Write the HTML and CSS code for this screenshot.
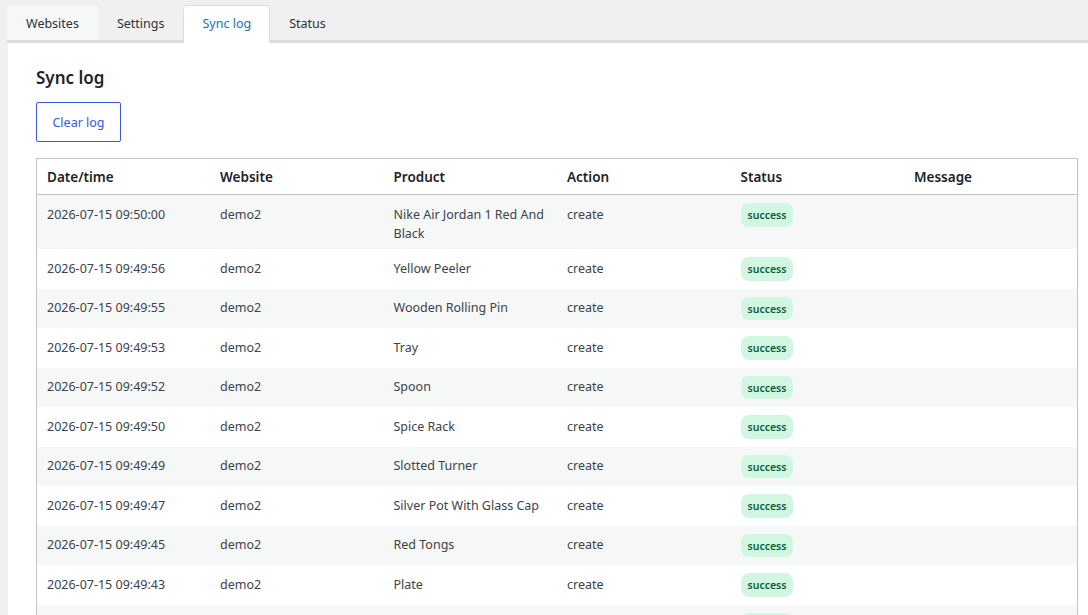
FILE: index.html
```html
<!DOCTYPE html>
<html>
<head>
<meta charset="utf-8">
<link rel="stylesheet" href="styles.css">
</head>
<body>
<div class="wrap">
  <nav class="tabs">
    <a class="tab tab-first">Websites</a>
    <a class="tab">Settings</a>
    <a class="tab tab-active">Sync log</a>
    <a class="tab">Status</a>
  </nav>
  <div class="panel">
    <h2 class="title">Sync log</h2>
    <button class="btn">Clear log</button>
    <table class="log">
      <thead>
        <tr><th>Date/time</th><th>Website</th><th>Product</th><th>Action</th><th>Status</th><th>Message</th></tr>
      </thead>
      <tbody>
        <tr><td>2026-07-15 09:50:00</td><td>demo2</td><td>Nike Air Jordan 1 Red And Black</td><td>create</td><td class="st"><span class="badge">success</span></td><td></td></tr>
        <tr><td>2026-07-15 09:49:56</td><td>demo2</td><td>Yellow Peeler</td><td>create</td><td class="st"><span class="badge">success</span></td><td></td></tr>
        <tr><td>2026-07-15 09:49:55</td><td>demo2</td><td>Wooden Rolling Pin</td><td>create</td><td class="st"><span class="badge">success</span></td><td></td></tr>
        <tr><td>2026-07-15 09:49:53</td><td>demo2</td><td>Tray</td><td>create</td><td class="st"><span class="badge">success</span></td><td></td></tr>
        <tr><td>2026-07-15 09:49:52</td><td>demo2</td><td>Spoon</td><td>create</td><td class="st"><span class="badge">success</span></td><td></td></tr>
        <tr><td>2026-07-15 09:49:50</td><td>demo2</td><td>Spice Rack</td><td>create</td><td class="st"><span class="badge">success</span></td><td></td></tr>
        <tr><td>2026-07-15 09:49:49</td><td>demo2</td><td>Slotted Turner</td><td>create</td><td class="st"><span class="badge">success</span></td><td></td></tr>
        <tr><td>2026-07-15 09:49:47</td><td>demo2</td><td>Silver Pot With Glass Cap</td><td>create</td><td class="st"><span class="badge">success</span></td><td></td></tr>
        <tr><td>2026-07-15 09:49:45</td><td>demo2</td><td>Red Tongs</td><td>create</td><td class="st"><span class="badge">success</span></td><td></td></tr>
        <tr><td>2026-07-15 09:49:43</td><td>demo2</td><td>Plate</td><td>create</td><td class="st"><span class="badge">success</span></td><td></td></tr>
        <tr><td>2026-07-15 09:49:41</td><td>demo2</td><td>Pan</td><td>create</td><td class="st"><span class="badge">success</span></td><td></td></tr>
      </tbody>
    </table>
  </div>
</div>
</body>
</html>
```
FILE: styles.css
```css
html, body {
  margin: 0;
  padding: 0;
  background: #f0f0f1;
  font-family: "Noto Sans", "Open Sans", sans-serif;
  font-size: 12.5px;
  color: #2c3338;
  overflow: hidden;
}
.wrap {
  padding: 5px 0 0 7px;
}
.tabs {
  display: flex;
  align-items: flex-end;
  border-bottom: 3px solid #dcdcde;
  height: 35px;
}
.tab {
  display: block;
  height: 35px;
  line-height: 37px;
  padding: 0 18px;
  margin-right: 1px;
  font-size: 12.5px;
  color: #2c3338;
  border-radius: 4px 4px 0 0;
  box-sizing: border-box;
}
.tab-first {
  background: #f6f7f7;
  padding: 0 19px;
}
.tab-active {
  background: #fff;
  color: #2271b1;
  border: 1px solid #dcdcde;
  border-bottom: none;
  height: 38px;
  margin-bottom: -3px;
  line-height: 36px;
  position: relative;
}
.panel {
  background: #fff;
  margin-left: 1px;
  padding: 22px 10px 0 28px;
  min-height: 600px;
}
.title {
  margin: 0;
  font-size: 17px;
  font-weight: 600;
  color: #1d2327;
  line-height: 26px;
}
.btn {
  display: block;
  margin-top: 11px;
  width: 85px;
  height: 40px;
  background: #fff;
  border: 1px solid #3858e9;
  border-radius: 2px;
  color: #3858e9;
  font-family: inherit;
  font-size: 12.5px;
  padding: 0;
}
.log {
  margin-top: 16px;
  width: 100%;
  border-collapse: collapse;
  table-layout: fixed;
  border: 1px solid #c3c4c7;
}
.log th {
  text-align: left;
  font-weight: 600;
  font-size: 13.5px;
  color: #1d2327;
  padding: 9px 10px 7px;
  line-height: 19px;
  border-bottom: 1px solid #c3c4c7;
}
.log td {
  padding: 9.5px 10px 6.5px;
  line-height: 19px;
  vertical-align: top;
  color: #3c434a;
}
.log td.st {
  padding: 8px 10px;
}
.log tbody tr:nth-child(odd) {
  background: #f6f7f7;
}
.badge {
  display: inline-block;
  vertical-align: top;
  height: 23.5px;
  line-height: 25px;
  padding: 0 7px;
  border-radius: 8px;
  background: #d1f7e2;
  color: #0b5e3a;
  font-size: 10.5px;
  font-weight: 600;
}
```
